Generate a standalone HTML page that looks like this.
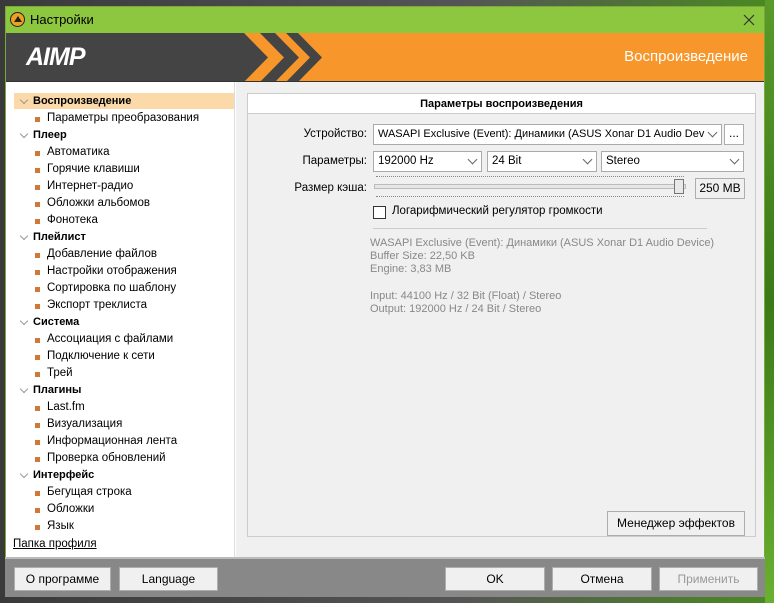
<!DOCTYPE html>
<html><head><meta charset="utf-8"><style>
*{margin:0;padding:0;box-sizing:border-box}
body{width:774px;height:603px;overflow:hidden;position:relative;background:linear-gradient(90deg,#3a3a3a,#555 60%,#4a8a20 100%);font-family:"Liberation Sans","DejaVu Sans",sans-serif;font-size:12px;color:#000}
.abs{position:absolute}
.bgr{left:765px;top:0;width:9px;height:603px;background:linear-gradient(#5a9a2a,#3a7a18,#6ab030)}
.win{left:5px;top:6px;width:760px;height:591px;background:#fff;border:1px solid #7aa83a}
.title{left:0;top:0;width:758px;height:26px;background:#8dc63f}
.header{left:0;top:26px;width:758px;height:49px;background:#f7962a;border-bottom:1px solid #333;overflow:hidden}
.side{left:0;top:75px;width:229px;height:476px;background:#fff;border-right:1px solid #ddd}
.content{left:230px;top:75px;width:528px;height:476px;background:#f0f0f0}
.btn{position:absolute;background:#f0f0f0;border:1px solid #adadad;text-align:center;line-height:22px;font-size:12px}
.it{position:absolute;left:41px;font-size:11.5px}
.it:before{content:"";position:absolute;left:-12px;top:5px;width:5px;height:5px;background:#d0783a}
.cat{position:absolute;left:27px;font-weight:bold;font-size:11px}
.cat:before{content:"";position:absolute;left:-12px;top:2px;width:5px;height:5px;border-right:1.5px solid #999;border-bottom:1.5px solid #999;transform:rotate(45deg)}
.combo{position:absolute;background:#fff;border:1px solid #aaa;height:21px;line-height:19px;padding-left:4px;font-size:11.5px;overflow:hidden;white-space:nowrap}
.combo .ar{position:absolute;right:5px;top:4px;width:7px;height:7px;border-right:1px solid #666;border-bottom:1px solid #666;transform:rotate(45deg)}
.lbl{position:absolute;text-align:right;font-size:11.5px}
.gray{color:#888;font-size:11px;position:absolute;left:370px;line-height:13px}
</style></head><body>
<div class="abs bgr"></div>
<div class="abs win">
 <div class="abs title">
  <div class="abs" style="left:4px;top:5px;width:15px;height:15px;border-radius:50%;background:#f0a020;border:1.5px solid #222"></div>
  <div class="abs" style="left:8px;top:9px;width:0;height:0;border-left:4px solid transparent;border-right:4px solid transparent;border-bottom:6px solid #222"></div>
  <div class="abs" style="left:24px;top:5px;font-size:13px">Настройки</div>
  <svg class="abs" style="left:737px;top:7px" width="12" height="12"><path d="M1 1L11 11M11 1L1 11" stroke="#333" stroke-width="1.2"/></svg>
 </div>
 <div class="abs header">
  <svg class="abs" style="left:0;top:0" width="340" height="49"><polygon points="0,0 238,0 262,24.5 238,49 0,49" fill="#444"/><polygon points="254,0 269,0 293,24.5 269,49 254,49 278,24.5" fill="#444"/><polygon points="280,0 292,0 316,24.5 292,49 280,49 304,24.5" fill="#444"/></svg>
  <div class="abs" style="left:20px;top:10px;font-size:25px;font-weight:bold;font-style:italic;color:#fff;letter-spacing:-1px">AIMP</div>
  <div class="abs" style="right:16px;top:15px;font-size:15px;color:#fff">Воспроизведение</div>
 </div>
 <div class="abs side">
  <div class="abs" style="left:8px;top:11px;width:220px;height:16px;background:#fcd9a8"></div>
  <div class="cat" style="top:13px">Воспроизведение</div>
  <div class="it" style="top:30px">Параметры преобразования</div>
  <div class="cat" style="top:47px">Плеер</div>
  <div class="it" style="top:64px">Автоматика</div>
  <div class="it" style="top:81px">Горячие клавиши</div>
  <div class="it" style="top:98px">Интернет-радио</div>
  <div class="it" style="top:115px">Обложки альбомов</div>
  <div class="it" style="top:132px">Фонотека</div>
  <div class="cat" style="top:149px">Плейлист</div>
  <div class="it" style="top:166px">Добавление файлов</div>
  <div class="it" style="top:183px">Настройки отображения</div>
  <div class="it" style="top:200px">Сортировка по шаблону</div>
  <div class="it" style="top:217px">Экспорт треклиста</div>
  <div class="cat" style="top:234px">Система</div>
  <div class="it" style="top:251px">Ассоциация с файлами</div>
  <div class="it" style="top:268px">Подключение к сети</div>
  <div class="it" style="top:285px">Трей</div>
  <div class="cat" style="top:302px">Плагины</div>
  <div class="it" style="top:319px">Last.fm</div>
  <div class="it" style="top:336px">Визуализация</div>
  <div class="it" style="top:353px">Информационная лента</div>
  <div class="it" style="top:370px">Проверка обновлений</div>
  <div class="cat" style="top:387px">Интерфейс</div>
  <div class="it" style="top:404px">Бегущая строка</div>
  <div class="it" style="top:421px">Обложки</div>
  <div class="it" style="top:438px">Язык</div>
  <div class="abs" style="left:7px;top:456px;text-decoration:underline;font-size:11.5px">Папка профиля</div>
 </div>
 <div class="abs content"></div>
 <div class="abs" style="left:241px;top:86px;width:509px;height:444px;border:1px solid #ccc;background:#f0f0f0">
  <div class="abs" style="left:0;top:0;width:507px;height:20px;background:#fff;border-bottom:1px solid #ccc;text-align:center;line-height:20px;font-weight:bold;font-size:11px">Параметры воспроизведения</div>
 </div>
</div>
<div class="lbl" style="left:250px;width:117px;top:128px">Устройство:</div>
<div class="combo" style="left:373px;top:124px;width:349px;padding-right:20px;font-size:11px">WASAPI Exclusive (Event): Динамики (ASUS Xonar D1 Audio Dev<span class="ar"></span></div>
<div class="btn" style="left:724px;top:124px;width:20px;height:21px;line-height:17px;background:#fff">...</div>
<div class="lbl" style="left:250px;width:117px;top:155px">Параметры:</div>
<div class="combo" style="left:373px;top:151px;width:109px">192000 Hz<span class="ar"></span></div>
<div class="combo" style="left:487px;top:151px;width:110px">24 Bit<span class="ar"></span></div>
<div class="combo" style="left:601px;top:151px;width:143px">Stereo<span class="ar"></span></div>
<div class="lbl" style="left:250px;width:117px;top:182px">Размер кэша:</div>
<div class="abs" style="left:374px;top:184px;width:312px;height:5px;border:1px solid #bbb;background:#e6e6e6"></div>
<div class="abs" style="left:376px;top:176px;width:308px;height:1px;border-top:1px dotted #888"></div>
<div class="abs" style="left:376px;top:196px;width:308px;height:1px;border-top:1px dotted #888"></div>
<div class="abs" style="left:674px;top:179px;width:10px;height:15px;background:#e8e8e8;border:1px solid #777"></div>
<div class="btn" style="left:695px;top:178px;width:50px;height:21px;line-height:19px">250 MB</div>
<div class="abs" style="left:373px;top:206px;width:13px;height:13px;border:1px solid #333;background:#fff"></div>
<div class="abs" style="left:392px;top:205px;font-size:11.5px">Логарифмический регулятор громкости</div>
<div class="abs" style="left:373px;top:228px;width:334px;height:1px;background:#ccc"></div>
<div class="gray" style="top:237px">WASAPI Exclusive (Event): Динамики (ASUS Xonar D1 Audio Device)<br>Buffer Size: 22,50 KB<br>Engine: 3,83 MB</div>
<div class="gray" style="top:290px">Input: 44100 Hz / 32 Bit (Float) / Stereo<br>Output: 192000 Hz / 24 Bit / Stereo</div>
<div class="btn" style="left:607px;top:511px;width:138px;height:25px">Менеджер эффектов</div>
<div class="abs" style="left:5px;top:557px;width:760px;height:40px;background:#888;border-top:2px solid #bbb"></div>
<div class="btn" style="left:14px;top:567px;width:97px;height:24px">О программе</div>
<div class="btn" style="left:119px;top:567px;width:99px;height:24px">Language</div>
<div class="btn" style="left:445px;top:567px;width:100px;height:24px">OK</div>
<div class="btn" style="left:552px;top:567px;width:100px;height:24px">Отмена</div>
<div class="btn" style="left:659px;top:567px;width:99px;height:24px;color:#999">Применить</div>
</body></html>
